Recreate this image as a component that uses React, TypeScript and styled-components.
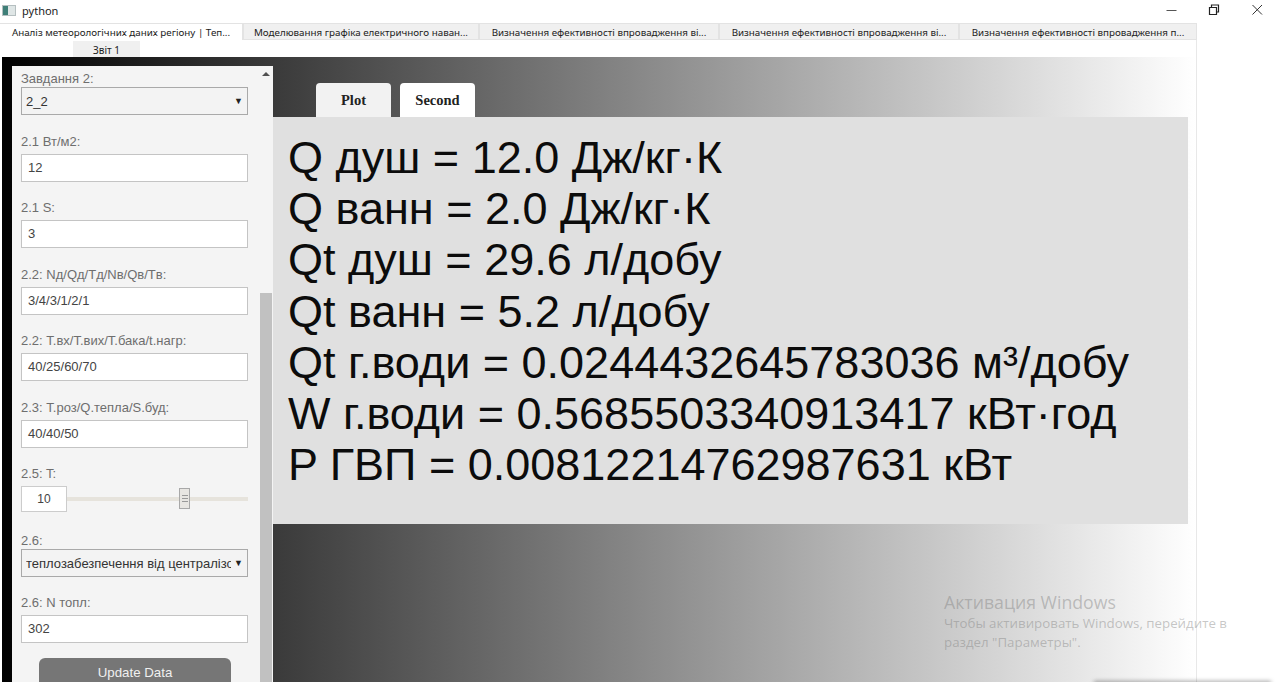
import React from "react";
import styled, { createGlobalStyle } from "styled-components";

const GlobalStyle = createGlobalStyle`
  html, body {
    margin: 0;
    height: 100%;
    overflow: hidden;
    background: #fff;
  }
  * {
    box-sizing: border-box;
  }
`;

const topTabs = [
  { label: "Аналіз метеорологічних даних регіону | Теп...", width: 243, active: true },
  { label: "Моделювання графіка електричного наван...", width: 236 },
  { label: "Визначення ефективності впровадження ві...", width: 240 },
  { label: "Визначення ефективності впровадження ві...", width: 240 },
  { label: "Визначення ефективності впровадження п...", width: 238 },
];

const results = [
  "Q душ = 12.0 Дж/кг·К",
  "Q ванн = 2.0 Дж/кг·К",
  "Qt душ = 29.6 л/добу",
  "Qt ванн = 5.2 л/добу",
  "Qt г.води = 0.0244432645783036 м³/добу",
  "W г.води = 0.5685503340913417 кВт·год",
  "P ГВП = 0.00812214762987631 кВт",
];

const fields = [
  { label: "2.1 Вт/м2:", value: "12" },
  { label: "2.1 S:", value: "3" },
  { label: "2.2: Nд/Qд/Tд/Nв/Qв/Tв:", value: "3/4/3/1/2/1" },
  { label: "2.2: Т.вх/Т.вих/Т.бака/t.нагр:", value: "40/25/60/70" },
  { label: "2.3: Т.роз/Q.тепла/S.буд:", value: "40/40/50" },
];

export default function App() {
  return (
    <>
      <GlobalStyle />
      <Window>
        <TitleBar>
          <AppIcon />
          <WindowTitle>python</WindowTitle>
          <WindowButtons>
            <svg width="14" height="14" viewBox="0 0 14 14">
              <path d="M1.500 7.500h10" stroke="#555" strokeWidth="1" fill="none" />
            </svg>
            <svg width="14" height="14" viewBox="0 0 14 14">
              <path d="M1.500 4.500h7v7h-7zM3.500 4.500V2h7v7H8.500" stroke="#222" strokeWidth="1.200" fill="none" />
            </svg>
            <svg width="14" height="14" viewBox="0 0 14 14">
              <path d="M1.500 2l9.500 9.500M11 2l-9.500 9.500" stroke="#333" strokeWidth="1" fill="none" />
            </svg>
          </WindowButtons>
        </TitleBar>
        <TabRow>
          {topTabs.map((tab, i) => (
            <TopTab key={i} $width={tab.width} $active={tab.active}>
              {tab.label}
            </TopTab>
          ))}
        </TabRow>
        <SubTabRow>
          <SubTab>Звіт 1</SubTab>
        </SubTabRow>
        <Page>
          <Sidebar>
            <SideContent>
              <Group $gap={18.9}>
                <Label>Завдання 2:</Label>
                <SelectBox>
                  <SelectText>2_2</SelectText>
                  <Caret>▼</Caret>
                </SelectBox>
              </Group>
              {fields.map((f) => (
                <Group key={f.label} $gap={18.5}>
                  <Label>{f.label}</Label>
                  <TextBox>{f.value}</TextBox>
                </Group>
              ))}
              <Group $gap={21}>
                <Label>2.5: T:</Label>
                <SliderRow>
                  <SliderValue>10</SliderValue>
                  <SliderTrack>
                    <SliderThumb>
                      <svg width="6" height="7" viewBox="0 0 6 7">
                        <path d="M0 .5h6M0 3.500h6M0 6.500h6" stroke="#999" strokeWidth="1" />
                      </svg>
                    </SliderThumb>
                  </SliderTrack>
                </SliderRow>
              </Group>
              <Group $gap={18}>
                <Label>2.6:</Label>
                <SelectBox>
                  <SelectText>теплозабезпечення від централізо</SelectText>
                  <Caret>▼</Caret>
                </SelectBox>
              </Group>
              <Group $gap={15}>
                <Label>2.6: N топл:</Label>
                <TextBox>302</TextBox>
              </Group>
              <UpdateButton>Update Data</UpdateButton>
            </SideContent>
            <ScrollBar>
              <ScrollArrow />
              <ScrollThumb />
            </ScrollBar>
          </Sidebar>
          <Main>
            <PlotTabs>
              <PlotTab>Plot</PlotTab>
              <PlotTab $active>Second</PlotTab>
            </PlotTabs>
            <ResultPanel>
              {results.map((line) => (
                <ResultLine key={line}>{line}</ResultLine>
              ))}
            </ResultPanel>
          </Main>
        </Page>
        <Watermark>
          <WatermarkTitle>Активация Windows</WatermarkTitle>
          <WatermarkText>
            Чтобы активировать Windows, перейдите в
            <br />
            раздел "Параметры".
          </WatermarkText>
        </Watermark>
        <BottomShade />
      </Window>
    </>
  );
}

const Window = styled.div`
  position: relative;
  width: 1280px;
  height: 682px;
  overflow: hidden;
  background: #fff;
  font-family: "Liberation Sans", Arial, sans-serif;
`;
const TitleBar = styled.div`
  display: flex;
  align-items: center;
  height: 23px;
  padding: 0 15px 3px 2px;
`;
const AppIcon = styled.div`
  width: 14px;
  height: 11px;
  margin-right: 6px;
  border: 1px solid #b5bfc0;
  background: linear-gradient(to right, #3f7f78 0 40%, #dfe6e6 40%);
`;
const WindowTitle = styled.span`
  font-family: "Noto Sans", sans-serif;
  font-size: 11px;
  color: #222;
`;
const WindowButtons = styled.div`
  display: flex;
  gap: 29px;
  margin-left: auto;
  align-items: center;
`;
const TabRow = styled.div`
  display: flex;
  height: 17px;
  width: 1197px;
`;
const TopTab = styled.div<{ $width: number; $active?: boolean }>`
  flex: 0 0 ${({ $width }) => $width}px;
  padding-top: 2px;
  overflow: hidden;
  text-align: center;
  font-family: "Noto Sans", sans-serif;
  font-size: 9.800px;
  line-height: 14px;
  color: #222;
  white-space: nowrap;
  background: ${({ $active }) => ($active ? "#fff" : "#f0f0f0")};
  border: 1px solid #e3e3e3;
  border-left-width: ${({ $active }) => ($active ? 0 : 1)}px;
  border-bottom: ${({ $active }) => ($active ? "0" : "1px solid #e3e3e3")};
`;
const SubTabRow = styled.div`
  height: 17px;
  width: 1197px;
  padding: 1px 0 0 73px;
  border-right: 1px solid #e8e8e8;
`;
const SubTab = styled.div`
  width: 67px;
  height: 16px;
  text-align: center;
  font-family: "Noto Sans", sans-serif;
  font-size: 10px;
  line-height: 18px;
  color: #222;
  background: #f0f0f0;
`;
const Page = styled.div`
  display: flex;
  width: 1195px;
  height: 625px;
  margin-left: 2px;
  padding: 9px 0 0 10px;
  background: linear-gradient(to right, #000 0%, #fff 100%);
  border-right: 1px solid #e8e8e8;
`;
const Sidebar = styled.aside`
  display: flex;
  flex: 0 0 261px;
  height: 640px;
  background: #f4f4f4;
`;
const SideContent = styled.div`
  flex: 0 0 248px;
  padding: 5px 0 0 9px;
`;
const Group = styled.div<{ $gap: number }>`
  width: 227px;
  margin-bottom: ${({ $gap }) => $gap}px;
`;
const Label = styled.div`
  height: 16px;
  font-size: 13px;
  line-height: 16px;
  color: #6e6e6e;
`;
const SelectBox = styled.div`
  display: flex;
  align-items: center;
  justify-content: space-between;
  height: 28px;
  padding: 0 4px 0 4px;
  border: 1px solid #a9a9a9;
  background: #f3f3f3;
`;
const SelectText = styled.span`
  overflow: hidden;
  flex: 0 0 205px;
  white-space: nowrap;
  font-size: 13px;
  color: #333;
`;
const Caret = styled.span`
  font-size: 9px;
  color: #222;
`;
const TextBox = styled.div`
  height: 28px;
  margin-top: 4px;
  padding-left: 6px;
  font-size: 13px;
  line-height: 26px;
  color: #444;
  background: #fff;
  border: 1px solid #c4c4c4;
`;
const SliderRow = styled.div`
  display: flex;
  align-items: center;
  height: 26px;
  margin-top: 4px;
`;
const SliderValue = styled.div`
  flex: 0 0 46px;
  height: 26px;
  text-align: center;
  font-size: 12px;
  line-height: 25px;
  color: #444;
  background: #fff;
  border: 1px solid #ccc;
`;
const SliderTrack = styled.div`
  position: relative;
  flex: 1;
  height: 4px;
  background: #e6e3dc;
`;
const SliderThumb = styled.div`
  position: absolute;
  left: 112px;
  top: -9px;
  display: flex;
  align-items: center;
  justify-content: center;
  width: 11px;
  height: 21px;
  background: #e8e6e2;
  border: 1px solid #a8a8a8;
`;
const UpdateButton = styled.div`
  width: 192px;
  height: 44px;
  margin-left: 18px;
  padding-top: 7px;
  text-align: center;
  font-size: 13.300px;
  color: #f0f0f0;
  background: #767676;
  border-radius: 6px;
`;
const ScrollBar = styled.div`
  position: relative;
  flex: 0 0 13px;
  background: #f4f4f4;
`;
const ScrollArrow = styled.div`
  position: absolute;
  left: 2px;
  top: 6px;
  border-left: 4px solid transparent;
  border-right: 4px solid transparent;
  border-bottom: 4px solid #505050;
`;
const ScrollThumb = styled.div`
  position: absolute;
  top: 227px;
  bottom: 0;
  left: 0;
  right: 1px;
  background: #c1c1c1;
`;
const Main = styled.main`
  flex: 1;
  display: flex;
  flex-direction: column;
  padding-top: 17px;
`;
const PlotTabs = styled.div`
  display: flex;
  gap: 9px;
  height: 34px;
  padding-left: 43px;
`;
const PlotTab = styled.div<{ $active?: boolean }>`
  width: 75px;
  padding-top: 9px;
  text-align: center;
  font-family: "Liberation Serif", "Times New Roman", serif;
  font-size: 14.500px;
  font-weight: bold;
  color: #222;
  background: ${({ $active }) => ($active ? "#fff" : "#f2f2f2")};
  border-radius: 4px 4px 0 0;
`;
const ResultPanel = styled.div`
  width: 915px;
  height: 407px;
  padding: 15px 0 0 15px;
  background: #e0e0e0;
`;
const ResultLine = styled.div`
  height: 51.200px;
  font-size: 45px;
  line-height: 51.200px;
  color: #0c0c0c;
  white-space: nowrap;
`;
const Watermark = styled.div`
  position: absolute;
  left: 944px;
  top: 591px;
  font-family: "Open Sans", sans-serif;
  color: rgba(130, 130, 130, 0.45);
`;
const WatermarkTitle = styled.div`
  font-size: 17.700px;
  line-height: 23px;
`;
const WatermarkText = styled.div`
  font-size: 13.300px;
  line-height: 19px;
`;
const BottomShade = styled.div`
  position: absolute;
  left: 1095px;
  right: 10px;
  bottom: -2px;
  height: 2px;
  box-shadow: 0 0 4px 1px rgba(0, 0, 0, 0.35);
`;
